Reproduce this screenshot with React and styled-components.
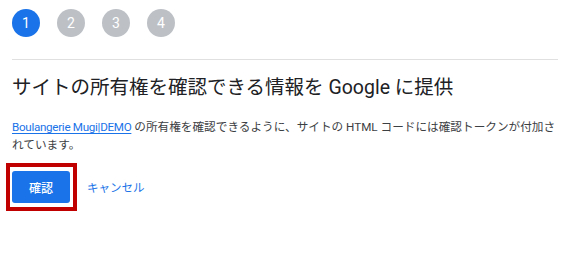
import React from "react";
import styled, { createGlobalStyle } from "styled-components";

const GlobalStyle = createGlobalStyle`
  body {
    margin: 0;
    background: #fff;
    font-family: Roboto, "Noto Sans CJK JP", sans-serif;
    color: #202124;
  }
`;

const Page = styled.div`
  padding: 9px 7px 0 12px;
`;

const Steps = styled.div`
  display: flex;
  gap: 17px;
  padding-bottom: 22px;
  border-bottom: 1px solid #e0e0e0;
`;

const Step = styled.div`
  width: 28px;
  height: 28px;
  border-radius: 50%;
  background: ${(p) => (p.$active ? "#1a73e8" : "#bdc1c6")};
  color: #fff;
  font-size: 14px;
  display: flex;
  align-items: center;
  justify-content: center;
`;

const Title = styled.h1`
  margin: 14px 0 0;
  font-size: 19.5px;
  font-weight: 400;
  line-height: 28px;
  color: #202124;
`;

const Text = styled.p`
  margin: 16px 0 0;
  font-size: 11.65px;
  line-height: 18px;
  color: #3c4043;
`;

const SiteLink = styled.a`
  color: #1a73e8;
  text-decoration: underline;
  text-underline-offset: 2px;
  letter-spacing: -0.3px;
`;

const Actions = styled.div`
  display: flex;
  align-items: center;
  gap: 10px;
  margin-top: 9px;
  margin-left: -6px;
`;

const Highlight = styled.div`
  border: 4px solid #c00000;
  padding: 4px 3px 4px 2px;
`;

const PrimaryButton = styled.button`
  width: 58px;
  height: 32px;
  border: none;
  border-radius: 3px;
  background: #1a73e8;
  color: #fff;
  font-family: inherit;
  font-size: 12px;
  font-weight: 500;
  display: block;
`;

const TextButton = styled.button`
  border: none;
  background: none;
  color: #1a73e8;
  font-family: inherit;
  font-size: 11.5px;
  padding: 0;
`;

export default function App() {
  return (
    <>
      <GlobalStyle />
      <Page>
        <Steps>
          {[1, 2, 3, 4].map((n) => (
            <Step key={n} $active={n === 1}>
              {n}
            </Step>
          ))}
        </Steps>
        <Title>サイトの所有権を確認できる情報を Google に提供</Title>
        <Text>
          <SiteLink href="#">Boulangerie Mugi|DEMO</SiteLink>{" "}
          の所有権を確認できるように、サイトの HTML コードには確認トークンが付加されています。
        </Text>
        <Actions>
          <Highlight>
            <PrimaryButton>確認</PrimaryButton>
          </Highlight>
          <TextButton>キャンセル</TextButton>
        </Actions>
      </Page>
    </>
  );
}
